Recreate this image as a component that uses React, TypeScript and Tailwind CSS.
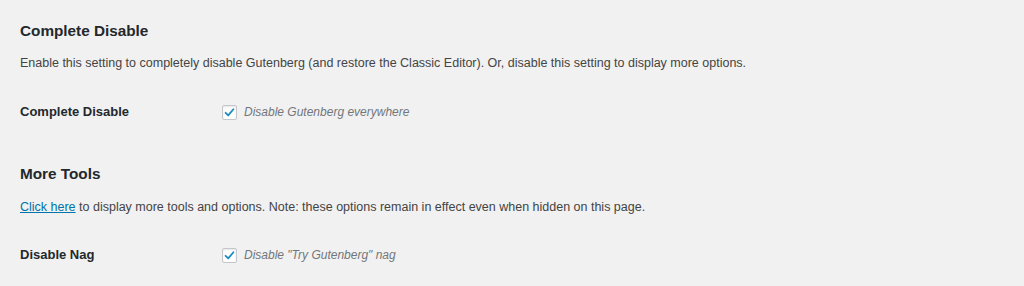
const font = "font-['Liberation_Sans',Arial,sans-serif]"

function Check({ label }: { label: string }) {
  return (
    <label className="flex items-center gap-[7px]">
      <span className="ml-[1px] flex h-[15px] w-[15px] items-center justify-center rounded-[2px] border border-[#c3c7ca] bg-white shadow-[inset_0_1px_2px_rgba(0,0,0,0.1)]">
        <svg viewBox="0 0 20 20" className="h-[15px] w-[15px]" fill="none">
          <path d="M4 10.5l4 4 8-9.5" stroke="#1e8cbe" strokeWidth="2.8" strokeLinecap="round" strokeLinejoin="round" />
        </svg>
      </span>
      <span className="text-[12px] italic text-[#72777c]">{label}</span>
    </label>
  )
}

function Row({ title, option }: { title: string; option: string }) {
  return (
    <div className="flex h-[40px] items-center">
      <div className="w-[201px] text-[13px] font-semibold text-[#23282d]">{title}</div>
      <Check label={option} />
    </div>
  )
}

export default function App() {
  return (
    <div className={`h-[286px] w-[1024px] overflow-hidden bg-[#f1f1f1] px-[20px] pt-[21px] ${font}`}>
      <h2 className="text-[15.3px] leading-[20px] font-semibold text-[#23282d]">Complete Disable</h2>
      <p className="mt-[12px] text-[12.5px] leading-[20px] text-[#444]">
        Enable this setting to completely disable Gutenberg (and restore the Classic Editor). Or, disable this setting to display more options.
      </p>
      <div className="mt-[19px]">
        <Row title="Complete Disable" option="Disable Gutenberg everywhere" />
      </div>

      <h2 className="mt-[32px] text-[15.3px] leading-[20px] font-semibold text-[#23282d]">More Tools</h2>
      <p className="mt-[13px] text-[12.5px] leading-[20px] text-[#444]">
        <a href="#" className="text-[#0073aa] underline">Click here</a> to display more tools and options. Note: these options remain in effect even when hidden on this page.
      </p>
      <div className="mt-[18px]">
        <Row title="Disable Nag" option={'Disable "Try Gutenberg" nag'} />
      </div>
    </div>
  )
}
